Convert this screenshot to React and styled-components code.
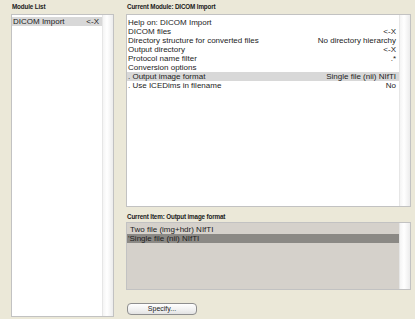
import React from 'react';
import styled, { createGlobalStyle } from 'styled-components';

const GlobalStyle = createGlobalStyle`
  html, body {
    margin: 0;
    padding: 0;
    background: #ebe8d8;
  }
  body {
    font-family: 'Liberation Sans Narrow', 'Liberation Sans', Arial, sans-serif;
    color: #1c1c1c;
  }
`;

const Window = styled.div`
  width: 415px;
  height: 319px;
  box-sizing: border-box;
  padding: 0 4px 0 11px;
  display: grid;
  grid-template-columns: 103px 285px;
  column-gap: 12px;
  background: #ebe8d8;
  overflow: hidden;
`;

const Column = styled.div`
  display: flex;
  flex-direction: column;
`;

const Label = styled.div`
  height: ${({ h }) => h || 14}px;
  display: flex;
  align-items: ${({ bottom }) => (bottom ? 'flex-end' : 'center')};
  padding: 0 0 ${({ bottom }) => (bottom ? 2 : 1)}px 1px;
  box-sizing: border-box;
  font-family: 'Liberation Sans', Arial, sans-serif;
  font-weight: bold;
  font-size: 6.3px;
  letter-spacing: -0.15px;
  color: #1a1a1a;
`;

const ListBox = styled.div`
  height: ${({ h }) => h}px;
  box-sizing: border-box;
  border: 1px solid #c2c2c2;
  background: ${({ grey }) => (grey ? '#d5d1cb' : '#ffffff')};
  display: flex;
`;

const Rows = styled.div`
  flex: 1;
  padding-top: ${({ top }) => top}px;
  min-width: 0;
`;

const Row = styled.div`
  height: 9px;
  line-height: 9px;
  display: flex;
  justify-content: space-between;
  padding: 0 3px 0 1px;
  font-size: 8px;
  white-space: pre;
  background: ${({ sel }) => (sel === 'dark' ? '#8b8985' : sel ? '#d8d8d8' : 'transparent')};
`;

const Scroll = styled.div`
  width: 10px;
  border-left: 1px solid #e6e6e6;
  background: linear-gradient(to right, #f4f4f4, #ffffff 40%, #ececec);
`;

const Footer = styled.div`
  flex: 1;
  display: flex;
  align-items: flex-start;
  padding: 13px 0 0 1px;
`;

const Button = styled.button`
  width: 70px;
  height: 12px;
  padding: 0;
  border: 1px solid #8e8e8e;
  border-radius: 4px;
  background: linear-gradient(#ffffff, #f0f0f0 60%, #e2e2e2);
  font-family: 'Liberation Sans Narrow', 'Liberation Sans', Arial, sans-serif;
  font-size: 7px;
  line-height: 10px;
  color: #222;
`;

const moduleRows = [
  ['Help on: DICOM Import', ''],
  ['DICOM files', '<-X'],
  ['Directory structure for converted files', 'No directory hierarchy'],
  ['Output directory', '<-X'],
  ['Protocol name filter', '.*'],
  ['Conversion options', ''],
  ['. Output image format', 'Single file (nii) NIfTI', true],
  ['. Use ICEDims in filename', 'No'],
];

const itemRows = [
  [' Two file (img+hdr) NIfTI', false],
  ["'Single file (nii) NIfTI", 'dark'],
];

export default function App() {
  return (
    <>
      <GlobalStyle />
      <Window>
        <Column>
          <Label>Module List</Label>
          <ListBox h={303}>
            <Rows top={2}>
              <Row sel>
                <span>DICOM Import</span>
                <span>&lt;-X</span>
              </Row>
            </Rows>
            <Scroll />
          </ListBox>
        </Column>
        <Column>
          <Label>Current Module: DICOM Import</Label>
          <ListBox h={193}>
            <Rows top={3}>
              {moduleRows.map(([name, value, sel]) => (
                <Row key={name} sel={sel}>
                  <span>{name}</span>
                  <span>{value}</span>
                </Row>
              ))}
            </Rows>
            <Scroll />
          </ListBox>
          <Label h={15} bottom>Current Item: Output image format</Label>
          <ListBox h={68} grey>
            <Rows top={2}>
              {itemRows.map(([name, sel]) => (
                <Row key={name} sel={sel}>
                  <span>{name}</span>
                </Row>
              ))}
            </Rows>
            <Scroll />
          </ListBox>
          <Footer>
            <Button>Specify...</Button>
          </Footer>
        </Column>
      </Window>
    </>
  );
}
